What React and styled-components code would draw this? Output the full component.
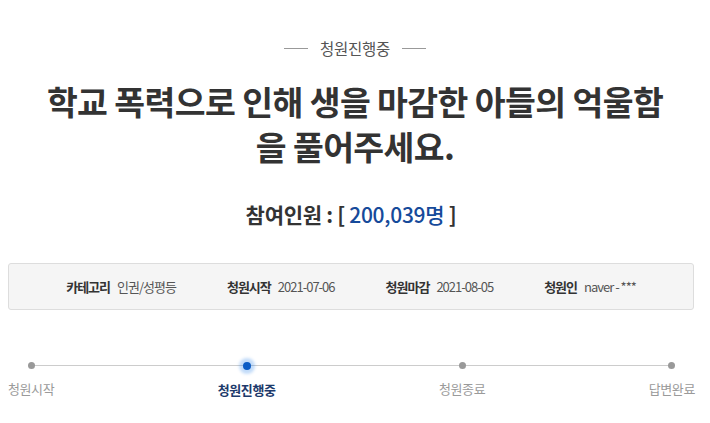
import React from 'react'
import styled, {createGlobalStyle} from 'styled-components'

const GlobalStyle = createGlobalStyle`
  body {
    margin: 0;
    background: #fff;
    font-family: "Noto Sans CJK KR", "Noto Sans", sans-serif;
    color: #333;
  }
`
const Page = styled.div`
  width: 710px;
  padding-top: 35px;
  display: flex;
  flex-direction: column;
  align-items: center;
`
const Tag = styled.div`
  display: flex;
  align-items: center;
  gap: 12px;
  height: 26px;
  font-size: 15.5px;
  color: #555;
  letter-spacing: -0.3px;
  &::before, &::after {
    content: '';
    width: 24px;
    height: 1px;
    background: #999;
  }
`
const Title = styled.h1`
  margin: 17px 0 0;
  font-size: 33.5px;
  line-height: 45px;
  font-weight: 700;
  color: #333;
  text-align: center;
  letter-spacing: -0.6px;
  white-space: nowrap;
`
const Count = styled.div`
  margin: 31px 8px 0 0;
  font-size: 21px;
  line-height: 30px;
  font-weight: 700;
  color: #333;
  letter-spacing: -0.3px;
`
const Number = styled.span`
  color: #164a9a;
  font-weight: 500;
`
const InfoBox = styled.div`
  box-sizing: border-box;
  align-self: flex-start;
  margin: 34px 0 0 8px;
  width: 686px;
  height: 47px;
  background: #f5f5f5;
  border: 1px solid #ddd;
  border-radius: 3px;
  display: flex;
  align-items: center;
  justify-content: center;
  gap: 51px;
`
const InfoItem = styled.div`
  display: flex;
  align-items: center;
  gap: 7px;
  font-size: 13px;
  letter-spacing: -1px;
  color: #555;
`
const InfoLabel = styled.span`
  font-weight: 700;
  color: #333;
`
const Progress = styled.div`
  position: relative;
  align-self: stretch;
  margin: 52px 15px 0 8px;
  display: flex;
  justify-content: space-between;
  &::before {
    content: '';
    position: absolute;
    top: 3px;
    left: 22px;
    right: 23px;
    height: 1px;
    background: #ccc;
  }
`
const Step = styled.div`
  display: flex;
  flex-direction: column;
  align-items: center;
  gap: 11px;
  position: relative;
`
const Dot = styled.span`
  width: ${p => p.active ? '8px' : '7px'};
  height: ${p => p.active ? '8px' : '7px'};
  margin-top: ${p => p.active ? '-0.5px' : '0'};
  border-radius: 50%;
  background: ${p => p.active ? '#0b5cc5' : '#999'};
  box-shadow: ${p => p.active ? '0 0 3px 4px rgba(40, 130, 235, 0.28)' : 'none'};
`
const StepLabel = styled.span`
  font-size: 13px;
  line-height: 18px;
  letter-spacing: -0.4px;
  color: ${p => p.active ? '#1d3a6b' : '#9a9a9a'};
  font-weight: ${p => p.active ? 700 : 400};
`

const info = [
  ['카테고리', '인권/성평등'],
  ['청원시작', '2021-07-06'],
  ['청원마감', '2021-08-05'],
  ['청원인', 'naver - ***'],
]
const steps = ['청원시작', '청원진행중', '청원종료', '답변완료']

const App = () => (
  <>
    <GlobalStyle/>
    <Page>
      <Tag>청원진행중</Tag>
      <Title>학교 폭력으로 인해 생을 마감한 아들의 억울함<br/>을 풀어주세요.</Title>
      <Count>참여인원 : [ <Number>200,039명</Number> ]</Count>
      <InfoBox>
        {info.map(([label, value]) => (
          <InfoItem key={label}>
            <InfoLabel>{label}</InfoLabel>
            <span>{value}</span>
          </InfoItem>
        ))}
      </InfoBox>
      <Progress>
        {steps.map((s, i) => (
          <Step key={s}>
            <Dot active={i === 1}/>
            <StepLabel active={i === 1}>{s}</StepLabel>
          </Step>
        ))}
      </Progress>
    </Page>
  </>
)
export default App
